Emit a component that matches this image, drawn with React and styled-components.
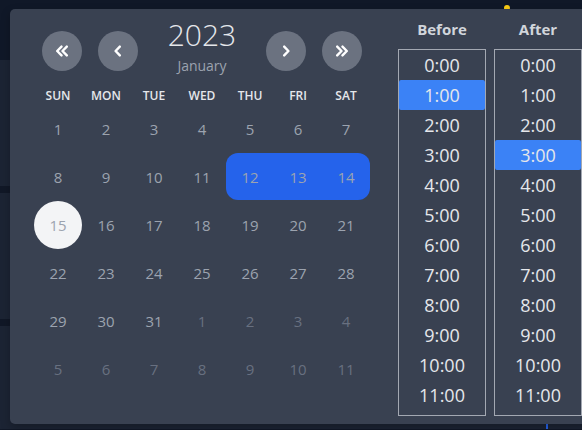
import React, { useState } from "react";
import styled, { createGlobalStyle } from "styled-components";

const GlobalStyle = createGlobalStyle`
  html, body {
    margin: 0;
    padding: 0;
    background: #111827;
    overflow: hidden;
  }
  body {
    font-family: "Open Sans", "Liberation Sans", sans-serif;
  }
`;

const WEEKDAYS = ["SUN", "MON", "TUE", "WED", "THU", "FRI", "SAT"];

// Jan 2023 starts on a Sunday; 6 rows shown
const buildDays = () => {
  const days = [];
  for (let i = 1; i <= 31; i++) days.push({ n: i, muted: false });
  let next = 1;
  while (days.length < 42) days.push({ n: next++, muted: true });
  return days;
};

// only the visible part of the scrolling hour list
const HOURS = Array.from({ length: 12 }, (_, i) => `${i}:00`);

const Chevron = ({ double, right }) => (
  <svg
    width={double ? 14 : 10}
    height="12"
    viewBox={double ? "0 0 14 12" : "0 0 10 12"}
    fill="none"
    stroke="#fff"
    strokeWidth="2.4"
    strokeLinecap="round"
    strokeLinejoin="round"
    style={right ? { transform: "scaleX(-1)" } : undefined}
  >
    {double ? (
      <>
        <polyline points="6.5,1.6 2.2,6 6.5,10.4" />
        <polyline points="11.8,1.6 7.5,6 11.8,10.4" />
      </>
    ) : (
      <polyline points="6.8,1.6 2.6,6 6.8,10.4" />
    )}
  </svg>
);

const App = () => {
  const [before, setBefore] = useState(1);
  const [after, setAfter] = useState(3);
  const days = buildDays();

  return (
    <>
      <GlobalStyle />
      <StyledPage>
        <StyledTopBar>
          <StyledDot />
        </StyledTopBar>
        <StyledRows>
          <StyledRow />
          <StyledRow />
          <StyledRow>
            <StyledTick />
          </StyledRow>
        </StyledRows>

        <StyledPopup>
          <StyledCalendar>
            <StyledHeader>
              <StyledNavGroup>
                <StyledNavButton>
                  <Chevron double />
                </StyledNavButton>
                <StyledNavButton>
                  <Chevron />
                </StyledNavButton>
              </StyledNavGroup>
              <StyledTitle>
                <p className="year">2023</p>
                <p className="month">January</p>
              </StyledTitle>
              <StyledNavGroup>
                <StyledNavButton>
                  <Chevron right />
                </StyledNavButton>
                <StyledNavButton>
                  <Chevron double right />
                </StyledNavButton>
              </StyledNavGroup>
            </StyledHeader>

            <StyledWeekdays>
              {WEEKDAYS.map((d) => (
                <span key={d}>{d}</span>
              ))}
            </StyledWeekdays>

            <StyledDays>
              {days.map((d, i) => {
                const inRange = !d.muted && d.n >= 12 && d.n <= 14;
                return (
                  <StyledDay
                    key={i}
                    $muted={d.muted}
                    $inRange={inRange}
                    $rangeStart={inRange && d.n === 12}
                    $rangeEnd={inRange && d.n === 14}
                    $today={!d.muted && d.n === 15}
                  >
                    {d.n}
                  </StyledDay>
                );
              })}
            </StyledDays>
          </StyledCalendar>

          <StyledTimes>
            <TimeColumn label="Before" value={before} onPick={setBefore} />
            <TimeColumn label="After" value={after} onPick={setAfter} />
          </StyledTimes>
        </StyledPopup>
      </StyledPage>
    </>
  );
};

export default App;

var TimeColumn = ({ label, value, onPick }) => {
  return (
    <StyledTimeColumn>
      <p className="label">{label}</p>
      <StyledTimeList>
        {HOURS.map((h, i) => (
          <StyledTimeItem key={h} $active={i === value} onClick={() => onPick(i)}>
            {h}
          </StyledTimeItem>
        ))}
      </StyledTimeList>
    </StyledTimeColumn>
  );
};

const StyledPage = styled.div`
  position: relative;
  width: 582px;
  height: 430px;
  overflow: hidden;
  background: #111827;
`;

const StyledTopBar = styled.div`
  height: 60px;
  background: #101828;
  display: flex;
  align-items: flex-start;
  padding-top: 5px;
  box-sizing: border-box;
`;

const StyledDot = styled.div`
  width: 6px;
  height: 6px;
  border-radius: 50%;
  background: #facc15;
  margin-left: 504px;
`;

const StyledRows = styled.div`
  display: flex;
  flex-direction: column;
  gap: 7px;
`;

const StyledRow = styled.div`
  height: 126px;
  background: #1c2434;
  display: flex;
  align-items: flex-end;

  &:last-child {
    height: 103px;
  }
`;

const StyledTick = styled.div`
  width: 2px;
  height: 7px;
  background: #2563eb;
  margin-left: 546px;
`;

const StyledPopup = styled.div`
  position: absolute;
  left: 10px;
  top: 9px;
  width: 580px;
  height: 415px;
  box-sizing: border-box;
  background: #394151;
  border-radius: 5px;
  display: flex;
  align-items: flex-start;
  padding: 11px 0 0 24px;
  box-shadow: 0 4px 10px rgba(0, 0, 0, 0.25);
`;

const StyledCalendar = styled.div`
  width: 336px;
  display: flex;
  flex-direction: column;
`;

const StyledHeader = styled.div`
  display: flex;
  justify-content: space-between;
  align-items: flex-start;
  padding: 0 8px;
`;

const StyledNavGroup = styled.div`
  display: flex;
  gap: 16px;
  margin-top: 11px;
`;

const StyledNavButton = styled.button`
  width: 40px;
  height: 40px;
  border: none;
  border-radius: 50%;
  background: #6b7280;
  display: flex;
  align-items: center;
  justify-content: center;
  padding: 0;
  cursor: pointer;
`;

const StyledTitle = styled.div`
  display: flex;
  flex-direction: column;
  align-items: center;

  p {
    margin: 0;
  }
  .year {
    font-size: 30px;
    line-height: 30px;
    font-weight: 300;
    color: #e5e7eb;
  }
  .month {
    font-size: 14px;
    line-height: 18px;
    margin-top: 7px;
    color: #9ca3af;
  }
`;

const StyledWeekdays = styled.div`
  display: grid;
  grid-template-columns: repeat(7, 48px);
  margin-top: 12px;
  height: 18px;

  span {
    text-align: center;
    font-size: 12px;
    line-height: 18px;
    font-weight: 600;
    color: #e5e7eb;
  }
`;

const StyledDays = styled.div`
  display: grid;
  grid-template-columns: repeat(7, 48px);
  grid-auto-rows: 48px;
`;

const StyledDay = styled.div`
  display: flex;
  align-items: center;
  justify-content: center;
  font-size: 15px;
  color: ${(p) => (p.$muted ? "#687080" : "#9ca3af")};
  background: ${(p) => (p.$inRange ? "#2563eb" : p.$today ? "#f3f4f6" : "transparent")};
  border-radius: ${(p) =>
    p.$today
      ? "50%"
      : p.$rangeStart
      ? "12px 0 0 12px"
      : p.$rangeEnd
      ? "0 12px 12px 0"
      : "0"};
  height: ${(p) => (p.$inRange ? "47px" : "48px")};
`;

const StyledTimes = styled.div`
  display: flex;
  gap: 8px;
  margin-left: 28px;
`;

const StyledTimeColumn = styled.div`
  width: 88px;
  display: flex;
  flex-direction: column;

  .label {
    margin: -1px 0 10px;
    text-align: center;
    font-size: 15px;
    line-height: 20px;
    font-weight: 700;
    color: #d1d5db;
  }
`;

const StyledTimeList = styled.div`
  height: 367px;
  box-sizing: border-box;
  border: 1px solid #a3a8b2;
  overflow: hidden;
`;

const StyledTimeItem = styled.div`
  height: 30px;
  line-height: 30px;
  text-align: center;
  font-size: 18px;
  color: #e5e7eb;
  border-radius: 2px;
  cursor: pointer;
  background: ${(p) => (p.$active ? "#3b82f6" : "transparent")};
`;
